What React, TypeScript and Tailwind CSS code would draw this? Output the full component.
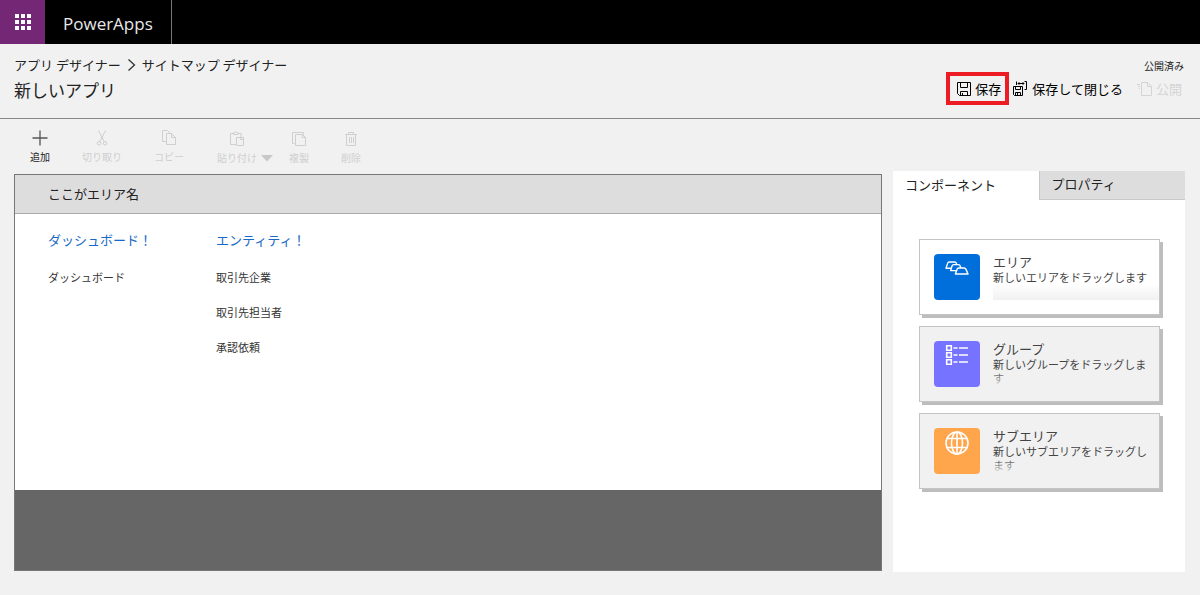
import React, { useState } from 'react';

const AreaIcon = () => (
    <svg width="24" height="14" viewBox="0 0 24 14" fill="#006fdb" stroke="#fff" strokeWidth="1.4" strokeLinejoin="round">
        <path d="M1 7.2 L2.6 2.4 Q3 1 4.4 1 H9.6 Q11 1 11.4 2.4 L12.6 7.2 Z" />
        <path d="M5.6 9.6 L7 5 Q7.4 3.6 8.8 3.6 H13.4 Q14.8 3.6 15.2 5 L16.6 9.6 Z" />
        <path d="M10.4 13 L12 8.4 Q12.4 7 13.8 7 H19 Q20.4 7 21 8.4 L23 13 Z" />
    </svg>
);

const GroupIcon = () => (
    <svg width="24" height="22" viewBox="0 0 24 22" fill="none" stroke="#fff" strokeWidth="1.6">
        <path d="M1.7 1.7h4.6v4.6H1.7zM1.7 8.7h4.6v4.6H1.7zM1.7 15.7h4.6v4.6H1.7z" />
        <path d="M8.5 4h4M14 4h9M8.5 11h4M14 11h9M8.5 18h4M14 18h9" />
    </svg>
);

const GlobeIcon = () => (
    <svg width="24" height="24" viewBox="0 0 24 24" fill="none" stroke="#fff" strokeWidth="1.6">
        <circle cx="12" cy="12" r="11" />
        <ellipse cx="12" cy="12" rx="5.5" ry="11" />
        <path d="M12 1v22M2.4 7.5h19.2M2.4 16.5h19.2" />
    </svg>
);

const SaveIcon = () => (
    <svg width="14" height="14" viewBox="0 0 14 14" fill="none" stroke="currentColor">
        <path d="M.5.5h13v13H2.5l-2-2zM3.5.5v5h7v-5M3.5 13.5v-4h7v4M5.5 11v2.5" />
    </svg>
);

const SaveCloseIcon = () => (
    <svg width="15" height="15" viewBox="0 0 15 15" fill="none" stroke="currentColor">
        <path d="M.5 5.5h9v9h-8l-1-1zM2.5 5.5v3h5v-3M2.5 14.5v-3h5v3M4.5 12v2" />
        <path d="M3.5 4V.5M11.5.5h2v8h-2M5 2.5h6" />
        <path d="M6.5 1L5 2.5 6.500 4M9.5 1L11 2.5 9.500 4" strokeWidth=".8" />
    </svg>
);

const PublishIcon = () => (
    <svg width="15" height="14" viewBox="0 0 15 14" fill="none" stroke="currentColor">
        <path d="M4.5.5h6l4 4v9h-10zM10.5.5v4h4M0 2.5h3M1 4.5h2M2 6.5h1" />
    </svg>
);

const AddIcon = () => (
    <svg width="16" height="16" viewBox="0 0 16 16" stroke="#555" strokeWidth="1.3">
        <path d="M8 .5v15M.5 8h15" />
    </svg>
);

const CutIcon = () => (
    <svg width="16" height="16" viewBox="0 0 16 16" fill="none" stroke="currentColor">
        <path d="M4.5.5l5.6 11M11.5.5L5.9 11.5" />
        <circle cx="5" cy="13.3" r="1.8" />
        <circle cx="11" cy="13.3" r="1.8" />
    </svg>
);

const CopyIcon = () => (
    <svg width="16" height="16" viewBox="0 0 16 16" fill="none" stroke="currentColor">
        <path d="M5 11.5H1.5V.5h5l3 3M5.5 3.5h5l4 4v7h-9zM10.5 3.5v4h4" />
    </svg>
);

const PasteIcon = () => (
    <svg width="16" height="16" viewBox="0 0 16 16" fill="none" stroke="currentColor">
        <path d="M7 13.5H1.5v-11h3M9 2.5h3V6M4.5 3.5v-2h1.2q1-1.500 2 0H9v2zM7.5 6.5h7v8h-7zM11.5 6.5v2h3" />
    </svg>
);

const DuplicateIcon = () => (
    <svg width="16" height="16" viewBox="0 0 16 16" fill="none" stroke="currentColor">
        <path d="M3.5 12.5h-2V1.5h11v2M4.5 3.5h7l3 3v8h-10zM11.5 3.5v3h3" />
    </svg>
);

const DeleteIcon = () => (
    <svg width="16" height="16" viewBox="0 0 16 16" fill="none" stroke="currentColor">
        <path d="M2 3.5h12M5.5 3.5v-2h5v2M3.5 3.5v11h9v-11M6.5 6v6M8.5 6v6M10.5 6v6" />
    </svg>
);

const components = [
    { name: 'エリア', description: '新しいエリアをドラッグします', card: 'bg-white', tile: 'bg-[#006fdb]', icon: <AreaIcon />, pad: 'pt-[7px]' },
    { name: 'グループ', description: '新しいグループをドラッグします', card: 'bg-[#f1f1f1]', tile: 'bg-[#7573ff]', icon: <GroupIcon />, pad: 'pt-[3px]' },
    { name: 'サブエリア', description: '新しいサブエリアをドラッグします', card: 'bg-[#f1f1f1]', tile: 'bg-[#ffa64d]', icon: <GlobeIcon />, pad: 'pt-[3px]' },
];

const groups = [
    { title: 'ダッシュボード！', items: ['ダッシュボード'] },
    { title: 'エンティティ！', items: ['取引先企業', '取引先担当者', '承認依頼'] },
];

const ToolButton: React.FC<{ label: string; icon: React.ReactNode; className: string; disabled?: boolean }> = ({ label, icon, className, disabled = true }) => (
    <button type="button" disabled={disabled} className={`flex flex-col items-center gap-[3px] text-[10px] leading-4 whitespace-nowrap ${disabled ? 'text-[#cfcfcf]' : 'text-[#222]'} ${className}`}>
        {icon}
        {label}
    </button>
);

const App: React.FC = () => {
    const [tab, setTab] = useState('components');

    const tabClass = (name: string) =>
        `flex-1 text-left pl-3 pb-0.5 h-[29px] ${tab === name ? 'bg-white' : 'bg-[#ddd] border-l border-b border-[#c8c8c8]'}`;

    return (
        <div lang="ja" className="min-h-screen bg-[#f1f1f1] text-[13px] text-[#222] font-['Noto_Sans_CJK_JP',sans-serif]">
            <header className="flex h-11 bg-black text-white">
                <button type="button" aria-label="アプリ" className="flex w-[45px] items-center justify-center bg-[#742774]">
                    <svg width="16" height="16" viewBox="0 0 16 16" fill="#fff">
                        <path d="M0 0h4v4H0zM6 0h4v4H6zM12 0h4v4h-4zM0 6h4v4H0zM6 6h4v4H6zM12 6h4v4h-4zM0 12h4v4H0zM6 12h4v4H6zM12 12h4v4h-4z" />
                    </svg>
                </button>
                <a href="#" className="flex items-center border-r border-[#777] px-[18px] pt-1 text-[17px] text-[#e8e8e8] font-['Open_Sans','Noto_Sans',sans-serif]">PowerApps</a>
            </header>

            <div className="flex justify-between border-b border-[#888] pb-[13px] pl-3.5 pr-4">
                <div className="pt-[11px]">
                    <nav className="flex items-center gap-1.5 leading-5">
                        <a href="#">アプリ デザイナー</a>
                        <svg width="9" height="12" viewBox="0 0 9 12" fill="none" stroke="#333" strokeWidth="1.3">
                            <path d="M1.5.5L7.5 6l-6 5.5" />
                        </svg>
                        <span>サイトマップ デザイナー</span>
                    </nav>
                    <h1 className="text-[17px] leading-[30px]">新しいアプリ</h1>
                </div>
                <div className="flex flex-col items-end pt-4">
                    <span className="text-[10px] leading-3">公開済み</span>
                    <div className="flex items-center pr-0.5 text-black">
                        <button type="button" className="flex h-[33px] items-center gap-1 border-4 border-[#ed1c24] pl-[7px] pr-1">
                            <SaveIcon />
                            保存
                        </button>
                        <button type="button" className="ml-1 flex items-center gap-1">
                            <SaveCloseIcon />
                            保存して閉じる
                        </button>
                        <button type="button" disabled className="ml-3.5 flex items-center gap-1 text-[#d4d4d4]">
                            <PublishIcon />
                            公開
                        </button>
                    </div>
                </div>
            </div>

            <div className="flex items-start gap-[11px] pb-6 pl-3.5 pr-[15px]">
                <main className="min-w-0 flex-1">
                    <div className="flex h-[55px] items-start">
                        <ToolButton label="追加" icon={<AddIcon />} disabled={false} className="px-4 pt-[11px]" />
                        <ToolButton label="切り取り" icon={<CutIcon />} className="px-4 pt-[11px]" />
                        <ToolButton label="コピー" icon={<CopyIcon />} className="px-4 pt-[11px]" />
                        <ToolButton label="貼り付け" icon={<PasteIcon />} className="pl-[17px] pr-1 pt-3" />
                        <button type="button" disabled aria-label="貼り付けオプション" className="pt-9">
                            <svg width="12" height="7" viewBox="0 0 12 7" fill="#c8c8c8">
                                <path d="M0 0h12L6 6.5z" />
                            </svg>
                        </button>
                        <ToolButton label="複製" icon={<DuplicateIcon />} className="px-4 pt-3" />
                        <ToolButton label="削除" icon={<DeleteIcon />} className="px-4 pt-3" />
                    </div>

                    <section className="border border-[#777] bg-white">
                        <h2 className="border-b border-[#aaa] bg-[#ddd] px-[33px] py-[9px] leading-5">ここがエリア名</h2>
                        <div className="flex min-h-[276px] px-[33px] pt-4">
                            {groups.map(g => (
                                <div key={g.title} className="w-[168px]">
                                    <h3 className="leading-5 text-[#1769c5]">{g.title}</h3>
                                    <ul className="mt-2.5 text-[11px] text-[#333]">
                                        {g.items.map(item => <li key={item} className="leading-[35px]">{item}</li>)}
                                    </ul>
                                </div>
                            ))}
                        </div>
                        <div className="h-20 bg-[#666]" />
                    </section>
                </main>

                <aside className="mt-[52px] min-h-[401px] w-[292px] shrink-0 bg-white">
                    <div className="flex" role="tablist">
                        <button type="button" role="tab" aria-selected={tab === 'components'} className={tabClass('components')} onClick={() => setTab('components')}>コンポーネント</button>
                        <button type="button" role="tab" aria-selected={tab === 'properties'} className={tabClass('properties')} onClick={() => setTab('properties')}>プロパティ</button>
                    </div>
                    {tab === 'components' && (
                        <ul className="flex flex-col gap-[11px] pl-[26px] pr-[25px] pt-[39px]">
                            {components.map(c => (
                                <li key={c.name} draggable className={`flex h-[76px] gap-[13px] border border-[#c4c4c4] pl-3.5 pt-3.5 shadow-[3px_3px_0_#bdbdbd] ${c.card}`}>
                                    <div className={`flex size-[46px] shrink-0 items-start justify-center rounded ${c.tile} ${c.pad}`}>{c.icon}</div>
                                    <div className="relative h-[46px] flex-1 text-[#444]">
                                        <h3 className="leading-4">{c.name}</h3>
                                        <p className="pr-2 text-[11px] leading-[14px]">{c.description}</p>
                                        <div className="absolute inset-x-0 bottom-0 h-4 bg-linear-to-b from-transparent to-[#f1f1f1]" />
                                    </div>
                                </li>
                            ))}
                        </ul>
                    )}
                </aside>
            </div>
        </div>
    );
};

export default App;
